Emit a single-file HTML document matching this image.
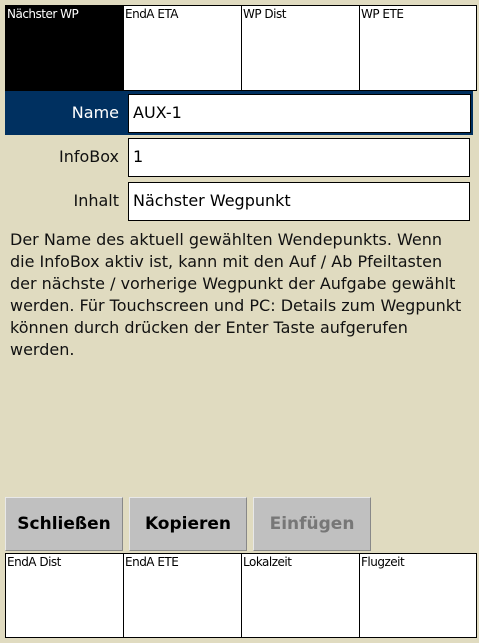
<!DOCTYPE html>
<html><head><meta charset="utf-8"><style>
*{margin:0;padding:0;box-sizing:border-box}
body{width:479px;height:643px;background:#e0dbc0;position:relative;overflow:hidden;font-family:"DejaVu Sans","Liberation Sans",sans-serif}
.ib{position:absolute;background:#fff;border:1px solid #000;font-size:12px;padding:1px 0 0 1px;color:#000;letter-spacing:-0.5px}
.lab{position:absolute;left:5px;width:114px;text-align:right;font-size:16px;color:#111}
.inp{position:absolute;left:128px;width:342px;height:39px;background:#fff;border:1px solid #000;font-size:16px;padding:8px 0 0 4px}
.btn{position:absolute;top:497px;width:118px;height:54px;background:#c0c0c0;border:1px solid #e8e8e8;border-right-color:#888;border-bottom-color:#888;font-weight:bold;font-size:17px;text-align:center;line-height:52px}
</style></head><body>
<div class="ib" style="left:5px;top:5px;width:119px;height:86px;background:#000;color:#fff">Nächster WP</div>
<div class="ib" style="left:123px;top:5px;width:119px;height:86px">EndA ETA</div>
<div class="ib" style="left:241px;top:5px;width:119px;height:86px">WP Dist</div>
<div class="ib" style="left:359px;top:5px;width:118px;height:86px">WP ETE</div>
<div style="position:absolute;left:5px;top:91px;width:468px;height:44px;background:#003060"></div>
<div class="lab" style="top:103px;color:#fff">Name</div>
<div class="inp" style="top:94px;width:343px">AUX-1</div>
<div class="lab" style="top:147px">InfoBox</div>
<div class="inp" style="top:138px">1</div>
<div class="lab" style="top:191px">Inhalt</div>
<div class="inp" style="top:182px">Nächster Wegpunkt</div>
<div style="position:absolute;left:10px;top:229px;width:458px;font-size:16px;line-height:22px;color:#111">Der Name des aktuell gewählten Wendepunkts. Wenn die InfoBox aktiv ist, kann mit den Auf / Ab Pfeiltasten der nächste / vorherige Wegpunkt der Aufgabe gewählt werden. Für Touchscreen und PC: Details zum Wegpunkt können durch drücken der Enter Taste aufgerufen werden.</div>
<div class="btn" style="left:5px">Schließen</div>
<div class="btn" style="left:129px">Kopieren</div>
<div class="btn" style="left:253px;color:#777">Einfügen</div>
<div class="ib" style="left:5px;top:553px;width:119px;height:85px">EndA Dist</div>
<div class="ib" style="left:123px;top:553px;width:119px;height:85px">EndA ETE</div>
<div class="ib" style="left:241px;top:553px;width:119px;height:85px">Lokalzeit</div>
<div class="ib" style="left:359px;top:553px;width:118px;height:85px">Flugzeit</div>
</body></html>
